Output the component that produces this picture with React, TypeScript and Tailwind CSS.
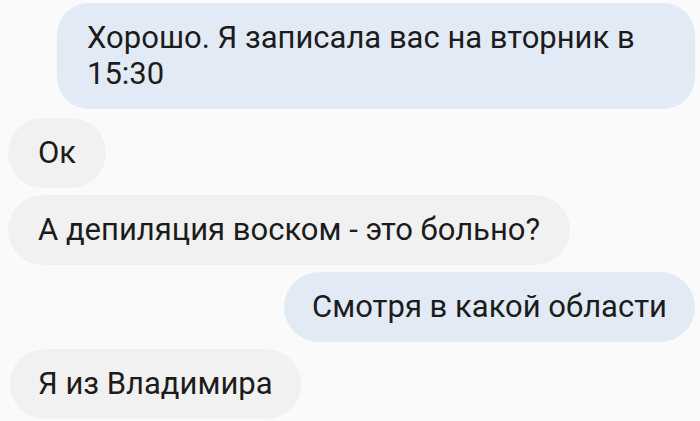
export default function App() {
  return (
    <div
      className="w-[700px] h-[421px] overflow-hidden bg-[#fafafa] text-[#1c1c1c] flex flex-col pt-[3px]"
      style={{ fontFamily: "Roboto, 'Noto Sans', sans-serif" }}
    >
      {/* outgoing */}
      <div className="flex justify-end pr-[5px]">
        <div className="w-[638px] bg-[#e2ebf5] rounded-[32px] pl-[30px] pr-[28px] py-[17px] text-[31px] leading-[36px]">
          Хорошо. Я записала вас на вторник в 15:30
        </div>
      </div>

      <div className="flex justify-start pl-[8px] mt-[9px]">
        <div className="bg-[#f1f1f1] rounded-[35px] px-[30px] py-[17px] text-[31px] leading-[36px]">
          Ок
        </div>
      </div>

      <div className="flex justify-start pl-[8px] mt-[7px]">
        <div className="bg-[#f1f1f1] rounded-[35px] px-[30px] py-[17px] text-[31px] leading-[36px]">
          А депиляция воском - это больно?
        </div>
      </div>

      <div className="flex justify-end pr-[5px] mt-[7px]">
        <div className="bg-[#e2ebf5] rounded-[35px] px-[28px] py-[17px] text-[31px] leading-[36px]">
          Смотря в какой области
        </div>
      </div>

      <div className="flex justify-start pl-[10px] mt-[7px]">
        <div className="bg-[#f1f1f1] rounded-[35px] px-[28px] py-[17px] text-[31px] leading-[36px]">
          Я из Владимира
        </div>
      </div>
    </div>
  );
}
